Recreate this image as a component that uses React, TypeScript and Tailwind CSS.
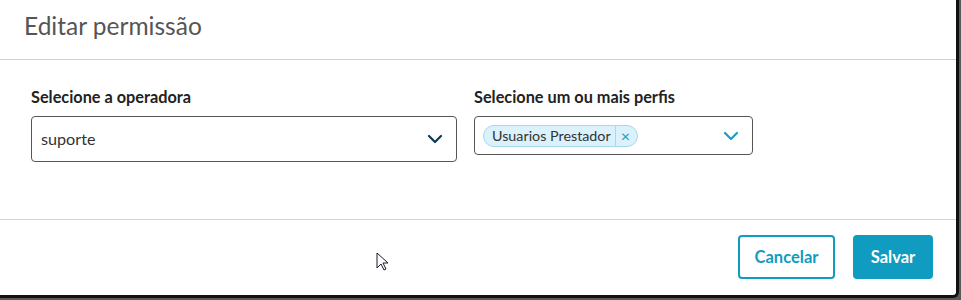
const FONT = { fontFamily: "Lato, 'Noto Sans', sans-serif" };

function Chevron({ color }: { color: string }) {
  return (
    <svg width="16" height="10" viewBox="0 0 16 10" fill="none">
      <path d="M2 2l6 6 6-6" stroke={color} strokeWidth="2.2" strokeLinecap="round" strokeLinejoin="round" />
    </svg>
  );
}

export default function App() {
  return (
    <div className="relative h-[300px] w-[961px] overflow-hidden bg-[#5a5a5a]" style={FONT}>
      <div className="flex h-[298px] w-[959px] flex-col rounded-br-[6px] border-r-[3px] border-b-[3px] border-[#111] bg-white">
        {/* header */}
        <div className="flex h-[60px] shrink-0 items-center border-b border-[#cfcfcf] px-6">
          <h2 className="-mt-[7px] text-[24.5px] font-normal text-[#555]">Editar permissão</h2>
        </div>

        {/* body */}
        <div className="flex h-[160px] shrink-0 gap-[17px] border-b border-[#d4d4d4] px-[31px] pt-[27px]">
          <div className="flex w-[426px] flex-col">
            <label className="mb-[9px] text-[16.3px] font-bold leading-[20px] text-[#222]">Selecione a operadora</label>
            <div className="flex h-[46px] items-center justify-between rounded border border-[#555] pl-[9px] pr-[13px]">
              <span className="text-[16.2px] text-[#333]">suporte</span>
              <Chevron color="#0b3a57" />
            </div>
          </div>
          <div className="flex w-[279px] flex-col">
            <label className="mb-[9px] text-[16.3px] font-bold leading-[20px] text-[#222]">Selecione um ou mais perfis</label>
            <div className="flex h-[39px] items-center justify-between rounded border border-[#555] pl-[8px] pr-[13px]">
              <span className="flex h-[22px] items-center rounded-full border border-[#a8d8ee] bg-[#dbf1fb] text-[14.3px] text-[#333]">
                <span className="pl-[8px] pr-[4px]">Usuarios Prestador</span>
                <span className="flex h-full items-center border-l border-[#a8d8ee] pl-[5px] pr-[7px] text-[16px] text-[#1a9cc4]">×</span>
              </span>
              <Chevron color="#1a9cc4" />
            </div>
          </div>
        </div>

        {/* footer */}
        <div className="flex flex-1 items-center justify-end gap-[18px] pr-[23px] pb-[1px]">
          <button className="h-[44px] w-[97px] rounded border-2 border-[#109cc0] text-[16.5px] font-bold text-[#109cc0]">
            Cancelar
          </button>
          <button className="h-[44px] w-[80px] rounded bg-[#109cc0] text-[16.5px] font-bold text-white">Salvar</button>
        </div>
      </div>

      {/* mouse cursor */}
      <svg className="absolute left-[376px] top-[252px]" width="13" height="20" viewBox="0 0 13 20">
        <path d="M1 1v15l4-4 3 6 2-1-3-6h5z" fill="white" stroke="#1a1a2a" strokeWidth="1" strokeLinejoin="round" />
      </svg>
    </div>
  );
}
